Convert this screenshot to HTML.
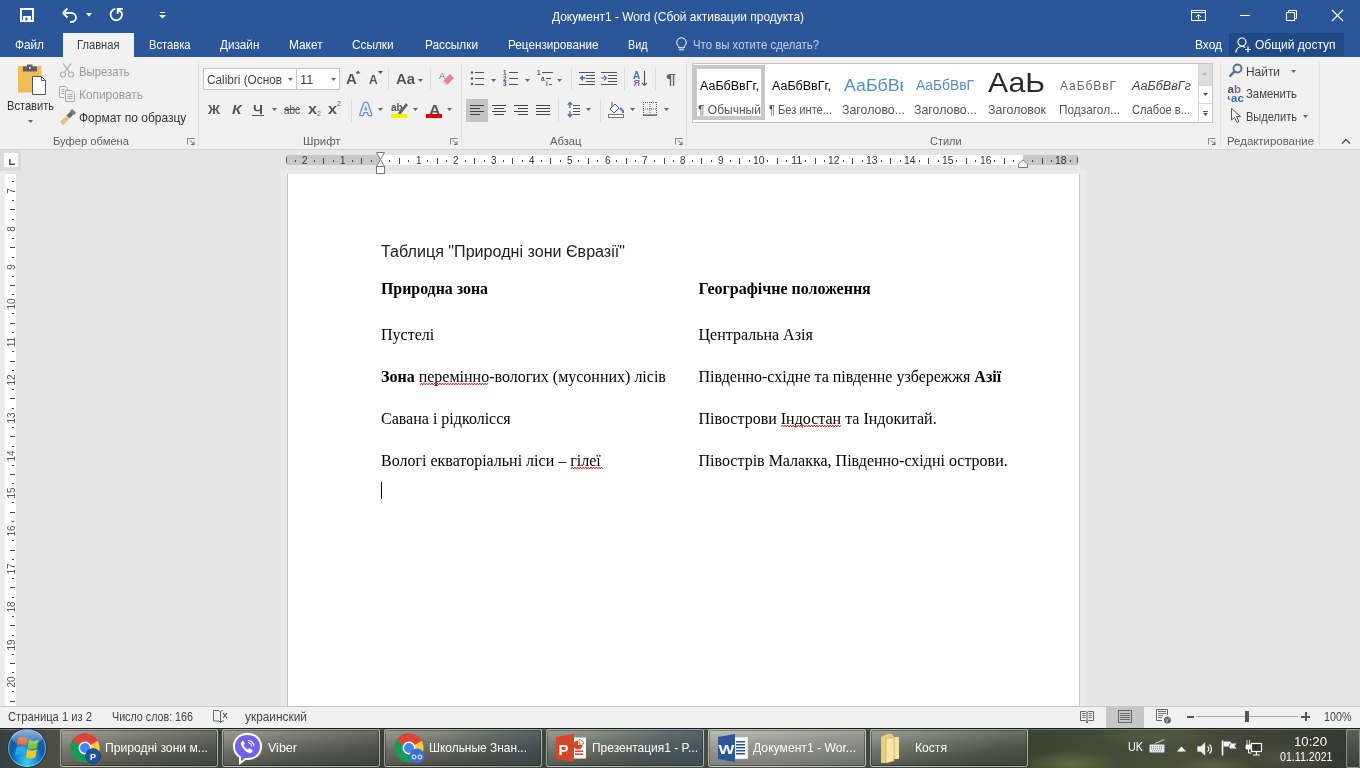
<!DOCTYPE html>
<html><head><meta charset="utf-8">
<style>
*{margin:0;padding:0;box-sizing:border-box}
html,body{width:1360px;height:768px;overflow:hidden;background:#e6e6e6;font-family:"Liberation Sans",sans-serif;position:relative}
.a{position:absolute;white-space:nowrap}
#root{position:absolute;left:0;top:0;width:1360px;height:768px;will-change:transform}
svg.a{overflow:visible}
</style></head><body><div id="root">
<div class="a" style="left:0px;top:0px;width:1360px;height:57px;background:#2b579a;"></div>
<svg class="a" style="left:20px;top:8px;" width="14" height="14" viewBox="0 0 14 14"><path d="M1 1H13V13H1Z" fill="none" stroke="#fff" stroke-width="2"/><rect x="3" y="8" width="8" height="5" fill="#fff"/><rect x="5.5" y="9.5" width="2" height="3" fill="#2b579a"/></svg>
<svg class="a" style="left:62px;top:7px;" width="16" height="16" viewBox="0 0 16 16"><path d="M3 6 H9.5 A4.5 4.5 0 0 1 9.5 15 H8" fill="none" stroke="#fff" stroke-width="1.8"/><path d="M1 6 L5.5 1.5 M1 6 L5.5 10.5" fill="none" stroke="#fff" stroke-width="1.8"/></svg>
<svg class="a" style="left:86px;top:13px;" width="6" height="4" viewBox="0 0 6 4"><path d="M0 0H6L3 3.5Z" fill="#fff"/></svg>
<svg class="a" style="left:109px;top:7px;" width="16" height="16" viewBox="0 0 16 16"><path d="M6.3 1.9A5.7 5.7 0 1 0 12.2 4.6" fill="none" stroke="#fff" stroke-width="1.8"/><path d="M14 1.8H8.7V6.8M9 2.1L12.4 5.5" fill="none" stroke="#fff" stroke-width="1.8"/></svg>
<svg class="a" style="left:159px;top:12px;" width="7" height="7" viewBox="0 0 7 7"><rect x="1" y="0" width="5" height="1" fill="#fff"/><path d="M0 3H7L3.5 6.5Z" fill="#fff"/></svg>
<div class="a" style="left:552px;top:11.00px;font-family:'Liberation Sans';font-size:12.6px;line-height:1;color:#fff;font-weight:normal;transform:scaleX(0.9476);transform-origin:0 0;">Документ1 - Word (Сбой активации продукта)</div>
<svg class="a" style="left:1191px;top:10px;" width="15" height="11" viewBox="0 0 15 11"><rect x="0.5" y="0.5" width="14" height="10" fill="none" stroke="#fff"/><line x1="0.5" y1="2.5" x2="14.5" y2="2.5" stroke="#fff"/><path d="M7.5 9.5V4.5M5 7L7.5 4.5L10 7" fill="none" stroke="#fff"/></svg>
<div class="a" style="left:1240px;top:15px;width:10px;height:1px;background:#fff;"></div>
<svg class="a" style="left:1286px;top:10px;" width="11" height="11" viewBox="0 0 11 11"><path d="M2.5 2.5V0.5H10.5V8.5H8.5" fill="none" stroke="#fff"/><rect x="0.5" y="2.5" width="8" height="8" fill="none" stroke="#fff"/></svg>
<svg class="a" style="left:1332px;top:10px;" width="11" height="11" viewBox="0 0 11 11"><path d="M0 0L11 11M11 0L0 11" stroke="#fff" stroke-width="1.1"/></svg>
<div class="a" style="left:63px;top:33px;width:71px;height:24px;background:#f1f1f1;"></div>
<div class="a" style="left:15px;top:39.00px;font-family:'Liberation Sans';font-size:12.6px;line-height:1;color:#fff;font-weight:normal;transform:scaleX(0.9364);transform-origin:0 0;">Файл</div>
<div class="a" style="left:76.5px;top:39.00px;font-family:'Liberation Sans';font-size:12.6px;line-height:1;color:#333d4d;font-weight:normal;transform:scaleX(0.8866);transform-origin:0 0;">Главная</div>
<div class="a" style="left:149px;top:39.00px;font-family:'Liberation Sans';font-size:12.6px;line-height:1;color:#fff;font-weight:normal;transform:scaleX(0.8887);transform-origin:0 0;">Вставка</div>
<div class="a" style="left:220px;top:39.00px;font-family:'Liberation Sans';font-size:12.6px;line-height:1;color:#fff;font-weight:normal;transform:scaleX(0.9305);transform-origin:0 0;">Дизайн</div>
<div class="a" style="left:289px;top:39.00px;font-family:'Liberation Sans';font-size:12.6px;line-height:1;color:#fff;font-weight:normal;transform:scaleX(0.9423);transform-origin:0 0;">Макет</div>
<div class="a" style="left:352.4px;top:39.00px;font-family:'Liberation Sans';font-size:12.6px;line-height:1;color:#fff;font-weight:normal;transform:scaleX(0.9381);transform-origin:0 0;">Ссылки</div>
<div class="a" style="left:424.5px;top:39.00px;font-family:'Liberation Sans';font-size:12.6px;line-height:1;color:#fff;font-weight:normal;transform:scaleX(0.9375);transform-origin:0 0;">Рассылки</div>
<div class="a" style="left:507.5px;top:39.00px;font-family:'Liberation Sans';font-size:12.6px;line-height:1;color:#fff;font-weight:normal;transform:scaleX(0.9306);transform-origin:0 0;">Рецензирование</div>
<div class="a" style="left:627.5px;top:39.00px;font-family:'Liberation Sans';font-size:12.6px;line-height:1;color:#fff;font-weight:normal;transform:scaleX(0.8554);transform-origin:0 0;">Вид</div>
<svg class="a" style="left:676px;top:37px;" width="11" height="14" viewBox="0 0 11 14"><path d="M5.5 0.7A4.8 4.8 0 0 0 2.6 9.3V10.8H8.4V9.3A4.8 4.8 0 0 0 5.5 0.7Z" fill="none" stroke="#fff" stroke-width="1"/><line x1="3" y1="12.8" x2="8" y2="12.8" stroke="#fff"/></svg>
<div class="a" style="left:693px;top:39.00px;font-family:'Liberation Sans';font-size:12.6px;line-height:1;color:#c3d2ea;font-weight:normal;transform:scaleX(0.9049);transform-origin:0 0;">Что вы хотите сделать?</div>
<div class="a" style="left:1194.5px;top:39.00px;font-family:'Liberation Sans';font-size:12.6px;line-height:1;color:#fff;font-weight:normal;transform:scaleX(0.9474);transform-origin:0 0;">Вход</div>
<div class="a" style="left:1229px;top:33px;width:115px;height:23px;background:#1f4a86;"></div>
<svg class="a" style="left:1235px;top:37px;" width="17" height="16" viewBox="0 0 17 16"><circle cx="7" cy="5" r="4" fill="none" stroke="#fff" stroke-width="1.2"/><path d="M0.8 15.5C1.5 11 4 9.5 7 9.5C8.5 9.5 9.5 9.9 10.3 10.5" fill="none" stroke="#fff" stroke-width="1.2"/><path d="M13 9.5V15.5M10 12.5H16" stroke="#fff" stroke-width="1.2"/></svg>
<div class="a" style="left:1255px;top:39.00px;font-family:'Liberation Sans';font-size:12.6px;line-height:1;color:#fff;font-weight:normal;transform:scaleX(0.9524);transform-origin:0 0;">Общий доступ</div>
<div class="a" style="left:0px;top:57px;width:1360px;height:93px;background:#f1f1f1;"></div>
<div class="a" style="left:0px;top:149px;width:1360px;height:1px;background:#d5d5d5;"></div>
<div class="a" style="left:198px;top:62px;width:1px;height:84px;background:#e1e1e1;"></div>
<div class="a" style="left:461px;top:62px;width:1px;height:84px;background:#e1e1e1;"></div>
<div class="a" style="left:686px;top:62px;width:1px;height:84px;background:#e1e1e1;"></div>
<div class="a" style="left:1220px;top:62px;width:1px;height:84px;background:#e1e1e1;"></div>
<div class="a" style="left:1319px;top:62px;width:1px;height:84px;background:#e1e1e1;"></div>
<svg class="a" style="left:17px;top:64px;" width="30" height="32" viewBox="0 0 30 32"><rect x="1" y="2" width="23.5" height="26.5" fill="#f1bb56"/><rect x="6" y="2.5" width="14" height="5" fill="#5e5870"/><rect x="10" y="0.5" width="5.5" height="3" fill="#5e5870"/><rect x="12" y="3" width="1.6" height="1.6" fill="#fff"/><path d="M15.5 12.5H24.5L28.5 16.5V30.5H15.5Z" fill="#fff" stroke="#555"/><path d="M24.5 12.5V16.5H28.5" fill="none" stroke="#555"/></svg>
<div class="a" style="left:6.6px;top:100.00px;font-family:'Liberation Sans';font-size:12.8px;line-height:1;color:#333;font-weight:normal;transform:scaleX(0.8664);transform-origin:0 0;">Вставить</div>
<svg class="a" style="left:28px;top:120px;" width="5" height="3" viewBox="0 0 5 3"><path d="M0 0H5L2.5 3Z" fill="#666"/></svg>
<svg class="a" style="left:60px;top:63px;" width="15" height="15" viewBox="0 0 15 15"><circle cx="3" cy="11.5" r="2.5" fill="none" stroke="#aaa" stroke-width="1.2"/><circle cx="11" cy="11.5" r="2.5" fill="none" stroke="#aaa" stroke-width="1.2"/><path d="M4.5 9.5L11 0.5M9.5 9.5L3 0.5" stroke="#aaa" stroke-width="1.2"/></svg>
<div class="a" style="left:79.4px;top:66.00px;font-family:'Liberation Sans';font-size:12.8px;line-height:1;color:#9a9a9a;font-weight:normal;transform:scaleX(0.8872);transform-origin:0 0;">Вырезать</div>
<svg class="a" style="left:59px;top:86px;" width="16" height="16" viewBox="0 0 16 16"><path d="M0.5 0.5H6.5L8.5 2.5V4M0.5 0.5V11.5H5" fill="none" stroke="#aaa"/><path d="M6.5 4.5H12.5L15.5 7.5V15.5H6.5Z" fill="none" stroke="#aaa"/><path d="M8.5 8.5H13.5M8.5 10.5H13.5M8.5 12.5H13.5M2.5 3.5H5.5M2.5 5.5H5.5M2.5 7.5H5" stroke="#aaa"/></svg>
<div class="a" style="left:79.4px;top:89.10px;font-family:'Liberation Sans';font-size:12.8px;line-height:1;color:#9a9a9a;font-weight:normal;transform:scaleX(0.9288);transform-origin:0 0;">Копировать</div>
<svg class="a" style="left:59px;top:109px;" width="17" height="16" viewBox="0 0 17 16"><path d="M1 13L7 7L10 10L4 16Z" fill="#e8c070"/><path d="M7.5 6.5L11.5 2.5L14.5 5.5L10.5 9.5Z" fill="#666"/><path d="M11 2L13 0L17 4L15 6Z" fill="#777"/></svg>
<div class="a" style="left:79.4px;top:111.80px;font-family:'Liberation Sans';font-size:12.8px;line-height:1;color:#333;font-weight:normal;transform:scaleX(0.9351);transform-origin:0 0;">Формат по образцу</div>
<div class="a" style="left:52.6px;top:134.60px;font-family:'Liberation Sans';font-size:11.6px;line-height:1;color:#5e5e5e;font-weight:normal;transform:scaleX(0.9647);transform-origin:0 0;">Буфер обмена</div>
<svg class="a" style="left:187px;top:138px;" width="8" height="7" viewBox="0 0 8 7"><path d="M0.5 6.5V0.5H7.5" fill="none" stroke="#888"/><path d="M3 2.5L7 6.5M7 3.5V6.5H4" fill="none" stroke="#666" stroke-width="1"/></svg>
<div class="a" style="left:203px;top:68px;width:137px;height:22px;background:#fff;border:1px solid #c6c6c6"></div>
<div class="a" style="left:296px;top:69px;width:1px;height:20px;background:#c6c6c6;"></div>
<div class="a" style="left:207px;top:73.50px;font-family:'Liberation Sans';font-size:12.8px;line-height:1;color:#444;font-weight:normal;transform:scaleX(0.9211);transform-origin:0 0;">Calibri (Основ</div>
<svg class="a" style="left:288px;top:78px;" width="5" height="3" viewBox="0 0 5 3"><path d="M0 0H5L2.5 3Z" fill="#666"/></svg>
<div class="a" style="left:300px;top:73.50px;font-family:'Liberation Sans';font-size:12.8px;line-height:1;color:#444;font-weight:normal;">11</div>
<svg class="a" style="left:331px;top:78px;" width="5" height="3" viewBox="0 0 5 3"><path d="M0 0H5L2.5 3Z" fill="#666"/></svg>
<svg class="a" style="left:345px;top:69px;" width="17" height="17" viewBox="0 0 17 17"><text x="1" y="15" font-family="Liberation Sans" font-size="15" font-weight="bold" fill="#555">A</text><path d="M10.5 4.5H15.5L13 1.5Z" fill="#555"/></svg>
<svg class="a" style="left:368px;top:70px;" width="17" height="16" viewBox="0 0 17 16"><text x="1" y="14" font-family="Liberation Sans" font-size="12" font-weight="bold" fill="#555">A</text><path d="M10 1H15L12.5 4Z" fill="#555"/></svg>
<div class="a" style="left:388px;top:68px;width:1px;height:22px;background:#dcdcdc;"></div>
<div class="a" style="left:396px;top:72.00px;font-family:'Liberation Sans';font-size:14px;line-height:1;color:#555;font-weight:bold;transform:scaleX(1.0611);transform-origin:0 0;">Aa</div>
<svg class="a" style="left:418px;top:79px;" width="5" height="3" viewBox="0 0 5 3"><path d="M0 0H5L2.5 3Z" fill="#666"/></svg>
<div class="a" style="left:430px;top:68px;width:1px;height:22px;background:#dcdcdc;"></div>
<svg class="a" style="left:439px;top:70px;" width="16" height="16" viewBox="0 0 16 16"><text x="0" y="9" font-family="Liberation Sans" font-size="9" fill="#777">A</text><path d="M4 11L11 4L15 8L8 15Z" fill="#e07a86" opacity=".9"/><path d="M4 11L8 15" stroke="#f4c0c6" stroke-width="2"/></svg>
<div class="a" style="left:207.5px;top:102.60px;font-family:'Liberation Sans';font-size:13px;line-height:1;color:#555;font-weight:bold;transform:scaleX(1.0213);transform-origin:0 0;">Ж</div>
<div class="a" style="left:231.5px;top:102.60px;font-family:'Liberation Sans';font-size:13px;line-height:1;color:#555;font-weight:bold;transform:scaleX(1.1875);transform-origin:0 0;font-style:italic">К</div>
<div class="a" style="left:253px;top:102.60px;font-family:'Liberation Sans';font-size:13px;line-height:1;color:#555;font-weight:bold;transform:scaleX(1.0940);transform-origin:0 0;">Ч</div>
<div class="a" style="left:252px;top:115px;width:12px;height:1.2px;background:#555;"></div>
<svg class="a" style="left:272px;top:108px;" width="5" height="3" viewBox="0 0 5 3"><path d="M0 0H5L2.5 3Z" fill="#666"/></svg>
<div class="a" style="left:284px;top:103.60px;font-family:'Liberation Sans';font-size:12.8px;line-height:1;color:#555;font-weight:normal;transform:scaleX(0.7752);transform-origin:0 0;">abc</div>
<div class="a" style="left:284px;top:109px;width:16px;height:1px;background:#555;"></div>
<div class="a" style="left:308px;top:101.60px;font-family:'Liberation Sans';font-size:14px;line-height:1;color:#555;font-weight:bold;transform:scaleX(1.1543);transform-origin:0 0;">x</div>
<div class="a" style="left:317px;top:110.00px;font-family:'Liberation Sans';font-size:7px;line-height:1;color:#2e75b6;font-weight:normal;">2</div>
<div class="a" style="left:328px;top:101.60px;font-family:'Liberation Sans';font-size:14px;line-height:1;color:#555;font-weight:bold;transform:scaleX(1.1543);transform-origin:0 0;">x</div>
<div class="a" style="left:337px;top:100.00px;font-family:'Liberation Sans';font-size:7px;line-height:1;color:#555;font-weight:normal;">2</div>
<div class="a" style="left:351px;top:99px;width:1px;height:23px;background:#dcdcdc;"></div>
<svg class="a" style="left:359px;top:101px;" width="16" height="16" viewBox="0 0 16 16"><text x="1" y="14" font-family="Liberation Sans" font-size="16" font-weight="bold" fill="#e6f0fa" stroke="#6a93c2" stroke-width="2.6" paint-order="stroke" stroke-linejoin="round">A</text></svg>
<svg class="a" style="left:378px;top:108px;" width="5" height="3" viewBox="0 0 5 3"><path d="M0 0H5L2.5 3Z" fill="#666"/></svg>
<svg class="a" style="left:391px;top:101px;" width="19" height="18" viewBox="0 0 19 18"><text x="0" y="10" font-family="Liberation Sans" font-size="10" font-weight="bold" fill="#555">ab</text><path d="M7 12L15 2L17 4L9 14Z" fill="#666"/><rect x="0" y="13" width="16" height="4" fill="#f2f200"/></svg>
<svg class="a" style="left:413px;top:108px;" width="5" height="3" viewBox="0 0 5 3"><path d="M0 0H5L2.5 3Z" fill="#666"/></svg>
<div class="a" style="left:428.5px;top:101.50px;font-family:'Liberation Sans';font-size:15px;line-height:1;color:#555;font-weight:bold;transform:scaleX(1.0605);transform-origin:0 0;">A</div>
<div class="a" style="left:426px;top:114px;width:16px;height:4px;background:#e00000;"></div>
<svg class="a" style="left:447px;top:108px;" width="5" height="3" viewBox="0 0 5 3"><path d="M0 0H5L2.5 3Z" fill="#666"/></svg>
<div class="a" style="left:303px;top:134.60px;font-family:'Liberation Sans';font-size:11.6px;line-height:1;color:#5e5e5e;font-weight:normal;transform:scaleX(0.9854);transform-origin:0 0;">Шрифт</div>
<svg class="a" style="left:450px;top:138px;" width="8" height="7" viewBox="0 0 8 7"><path d="M0.5 6.5V0.5H7.5" fill="none" stroke="#888"/><path d="M3 2.5L7 6.5M7 3.5V6.5H4" fill="none" stroke="#666" stroke-width="1"/></svg>
<svg class="a" style="left:470px;top:70px;" width="16" height="16" viewBox="0 0 16 16"><circle cx="2" cy="2.5" r="1.2" fill="#3d5f8c"/><circle cx="2" cy="8.5" r="1.2" fill="#3d5f8c"/><circle cx="2" cy="14" r="1.2" fill="#3d5f8c"/><rect x="5" y="2" width="9" height="1" fill="#555"/><rect x="5" y="8" width="9" height="1" fill="#555"/><rect x="5" y="14" width="9" height="1" fill="#555"/></svg>
<svg class="a" style="left:491px;top:79px;" width="5" height="3" viewBox="0 0 5 3"><path d="M0 0H5L2.5 3Z" fill="#666"/></svg>
<svg class="a" style="left:503px;top:70px;" width="16" height="16" viewBox="0 0 16 16"><text x="0" y="5" font-family="Liberation Sans" font-size="6.5" font-weight="bold" fill="#3d5f8c">1</text><text x="0" y="11" font-family="Liberation Sans" font-size="6.5" font-weight="bold" fill="#3d5f8c">2</text><text x="0" y="16" font-family="Liberation Sans" font-size="6.5" font-weight="bold" fill="#3d5f8c">3</text><rect x="6" y="2" width="9" height="1" fill="#555"/><rect x="6" y="8" width="9" height="1" fill="#555"/><rect x="6" y="14" width="9" height="1" fill="#555"/></svg>
<svg class="a" style="left:525px;top:79px;" width="5" height="3" viewBox="0 0 5 3"><path d="M0 0H5L2.5 3Z" fill="#666"/></svg>
<svg class="a" style="left:537px;top:70px;" width="18" height="16" viewBox="0 0 18 16"><text x="0" y="5" font-family="Liberation Sans" font-size="6.5" font-weight="bold" fill="#3d5f8c">1</text><text x="4" y="11" font-family="Liberation Sans" font-size="6.5" font-weight="bold" fill="#3d5f8c">a</text><text x="9" y="16" font-family="Liberation Sans" font-size="6.5" font-weight="bold" fill="#3d5f8c">i</text><rect x="5" y="2" width="11" height="1" fill="#555"/><rect x="9" y="8" width="5" height="1" fill="#555"/><rect x="12" y="14" width="3" height="1" fill="#555"/></svg>
<svg class="a" style="left:557px;top:79px;" width="5" height="3" viewBox="0 0 5 3"><path d="M0 0H5L2.5 3Z" fill="#666"/></svg>
<div class="a" style="left:571px;top:68px;width:1px;height:22px;background:#dcdcdc;"></div>
<svg class="a" style="left:579px;top:71px;" width="17" height="15" viewBox="0 0 17 15"><rect x="0" y="1" width="16" height="1" fill="#555"/><rect x="7" y="4" width="9" height="1" fill="#555"/><rect x="7" y="7" width="9" height="1" fill="#555"/><rect x="7" y="10" width="9" height="1" fill="#555"/><rect x="0" y="13" width="16" height="1" fill="#555"/><path d="M0.5 7L4 4V10Z M3 6.3H6.5V7.7H3Z" fill="#4a72a8"/></svg>
<svg class="a" style="left:601px;top:71px;" width="17" height="15" viewBox="0 0 17 15"><rect x="0" y="1" width="16" height="1" fill="#555"/><rect x="7" y="4" width="9" height="1" fill="#555"/><rect x="7" y="7" width="9" height="1" fill="#555"/><rect x="7" y="10" width="9" height="1" fill="#555"/><rect x="0" y="13" width="16" height="1" fill="#555"/><path d="M6.5 7L3 4V10Z M0.5 6.3H4V7.7H0.5Z" fill="#4a72a8"/></svg>
<div class="a" style="left:624px;top:68px;width:1px;height:22px;background:#dcdcdc;"></div>
<svg class="a" style="left:633px;top:70px;" width="16" height="17" viewBox="0 0 16 17"><text x="0" y="8.5" font-family="Liberation Sans" font-size="10" font-weight="bold" fill="#3f78b8">A</text><text x="0.5" y="16" font-family="Liberation Sans" font-size="9" font-weight="bold" fill="#8a5fb5">Я</text><path d="M11.5 1V15.5M9 12.8L11.5 15.5L14 12.8" fill="none" stroke="#555" stroke-width="1.1"/></svg>
<div class="a" style="left:655px;top:68px;width:1px;height:22px;background:#dcdcdc;"></div>
<div class="a" style="left:666px;top:70.50px;font-family:'Liberation Sans';font-size:15px;line-height:1;color:#666;font-weight:bold;transform:scaleX(1.1985);transform-origin:0 0;">¶</div>
<div class="a" style="left:466px;top:99px;width:22px;height:22.5px;background:#c5c5c5;"></div>
<svg class="a" style="left:470px;top:105px;" width="14" height="12" viewBox="0 0 14 12"><rect x="0" y="0" width="14" height="1" fill="#444"/><rect x="0" y="3" width="10" height="1" fill="#444"/><rect x="0" y="6" width="14" height="1" fill="#444"/><rect x="0" y="9" width="10" height="1" fill="#444"/></svg>
<svg class="a" style="left:492px;top:105px;" width="14" height="12" viewBox="0 0 14 12"><rect x="0.0" y="0" width="14" height="1" fill="#444"/><rect x="2.0" y="3" width="10" height="1" fill="#444"/><rect x="0.0" y="6" width="14" height="1" fill="#444"/><rect x="2.0" y="9" width="10" height="1" fill="#444"/></svg>
<svg class="a" style="left:514px;top:105px;" width="14" height="12" viewBox="0 0 14 12"><rect x="0" y="0" width="14" height="1" fill="#444"/><rect x="4" y="3" width="10" height="1" fill="#444"/><rect x="0" y="6" width="14" height="1" fill="#444"/><rect x="4" y="9" width="10" height="1" fill="#444"/></svg>
<svg class="a" style="left:536px;top:105px;" width="14" height="12" viewBox="0 0 14 12"><rect x="0" y="0" width="14" height="1" fill="#444"/><rect x="0" y="3" width="14" height="1" fill="#444"/><rect x="0" y="6" width="14" height="1" fill="#444"/><rect x="0" y="9" width="14" height="1" fill="#444"/></svg>
<div class="a" style="left:558px;top:99px;width:1px;height:23px;background:#dcdcdc;"></div>
<svg class="a" style="left:567px;top:101px;" width="14" height="18" viewBox="0 0 14 18"><path d="M3 1.5V7M0.8 3.7L3 1.5L5.2 3.7M3 10V15.5M0.8 13.3L3 15.5L5.2 13.3" fill="none" stroke="#4a6d96" stroke-width="1.3"/><rect x="6" y="4" width="7" height="1" fill="#555"/><rect x="6" y="7" width="7" height="1" fill="#555"/><rect x="6" y="10" width="7" height="1" fill="#555"/><rect x="6" y="13" width="7" height="1" fill="#555"/></svg>
<svg class="a" style="left:586px;top:108px;" width="5" height="3" viewBox="0 0 5 3"><path d="M0 0H5L2.5 3Z" fill="#666"/></svg>
<div class="a" style="left:600px;top:99px;width:1px;height:23px;background:#dcdcdc;"></div>
<svg class="a" style="left:607px;top:101px;" width="18" height="18" viewBox="0 0 18 18"><path d="M3 8L8 3L12 7L7 12Z" fill="#fff" stroke="#555" stroke-width="1"/><path d="M5 1V6" stroke="#555"/><path d="M13 7L16 10V12" fill="none" stroke="#4a7bb7" stroke-width="2"/><rect x="1.5" y="13.5" width="15" height="3" fill="#fff" stroke="#777"/></svg>
<svg class="a" style="left:630px;top:108px;" width="5" height="3" viewBox="0 0 5 3"><path d="M0 0H5L2.5 3Z" fill="#666"/></svg>
<svg class="a" style="left:643px;top:102px;" width="14" height="14" viewBox="0 0 14 14"><path d="M0.5 0V13 M13.5 0V13 M7 0V13 M0 0.5H14 M0 7H14" fill="none" stroke="#666" stroke-dasharray="1 1"/><rect x="0" y="12.5" width="14" height="1.3" fill="#555"/></svg>
<svg class="a" style="left:664px;top:108px;" width="5" height="3" viewBox="0 0 5 3"><path d="M0 0H5L2.5 3Z" fill="#666"/></svg>
<div class="a" style="left:550px;top:134.60px;font-family:'Liberation Sans';font-size:11.6px;line-height:1;color:#5e5e5e;font-weight:normal;transform:scaleX(0.9683);transform-origin:0 0;">Абзац</div>
<svg class="a" style="left:675px;top:138px;" width="8" height="7" viewBox="0 0 8 7"><path d="M0.5 6.5V0.5H7.5" fill="none" stroke="#888"/><path d="M3 2.5L7 6.5M7 3.5V6.5H4" fill="none" stroke="#666" stroke-width="1"/></svg>
<div class="a" style="left:692px;top:63px;width:521px;height:60px;background:#fff;border:1px solid #c6c6c6"></div>
<div class="a" style="left:693px;top:65px;width:72px;height:55px;background:#fff;border:4px solid #c8c8c8"></div>
<div class="a" style="left:700px;top:79.50px;font-family:'Liberation Sans';font-size:12.5px;line-height:1;color:#000;font-weight:normal;transform:scaleX(0.9992);transform-origin:0 0;">АаБбВвГг,</div>
<div class="a" style="left:697.6px;top:104.00px;font-family:'Liberation Sans';font-size:12.8px;line-height:1;color:#555;font-weight:normal;transform:scaleX(0.9403);transform-origin:0 0;">¶ Обычный</div>
<div class="a" style="left:772px;top:79.50px;font-family:'Liberation Sans';font-size:12.5px;line-height:1;color:#000;font-weight:normal;transform:scaleX(0.9992);transform-origin:0 0;">АаБбВвГг,</div>
<div class="a" style="left:769px;top:104.00px;font-family:'Liberation Sans';font-size:12.8px;line-height:1;color:#555;font-weight:normal;transform:scaleX(0.8652);transform-origin:0 0;">¶ Без инте...</div>
<div class="a" style="left:840px;top:66px;width:63px;height:54px;overflow:hidden">
<div class="a" style="left:4px;top:10.50px;font-family:'Liberation Sans';font-size:17px;line-height:1;color:#4f8fca;font-weight:normal;transform:scaleX(1.0442);transform-origin:0 0;">АаБбВв</div>
</div>
<div class="a" style="left:841.6px;top:104.00px;font-family:'Liberation Sans';font-size:12.8px;line-height:1;color:#555;font-weight:normal;transform:scaleX(0.9657);transform-origin:0 0;">Заголово...</div>
<div class="a" style="left:916px;top:77.50px;font-family:'Liberation Sans';font-size:14px;line-height:1;color:#5b8ec2;font-weight:normal;transform:scaleX(0.9857);transform-origin:0 0;">АаБбВвГ</div>
<div class="a" style="left:914px;top:104.00px;font-family:'Liberation Sans';font-size:12.8px;line-height:1;color:#555;font-weight:normal;transform:scaleX(0.9657);transform-origin:0 0;">Заголово...</div>
<div class="a" style="left:988px;top:69.00px;font-family:'Liberation Sans';font-size:28px;line-height:1;color:#2a2a2a;font-weight:normal;transform:scaleX(1.0767);transform-origin:0 0;">АаЬ</div>
<div class="a" style="left:988px;top:104.00px;font-family:'Liberation Sans';font-size:12.8px;line-height:1;color:#555;font-weight:normal;transform:scaleX(0.9639);transform-origin:0 0;">Заголовок</div>
<div class="a" style="left:1060px;top:78.50px;font-family:'Liberation Sans';font-size:13px;line-height:1;color:#666;font-weight:normal;transform:scaleX(0.9247);transform-origin:0 0;letter-spacing:1px">АаБбВвГ</div>
<div class="a" style="left:1058.6px;top:104.00px;font-family:'Liberation Sans';font-size:12.8px;line-height:1;color:#555;font-weight:normal;transform:scaleX(0.9264);transform-origin:0 0;">Подзагол...</div>
<div class="a" style="left:1132px;top:79.50px;font-family:'Liberation Sans';font-size:12.5px;line-height:1;color:#444;font-weight:normal;transform:scaleX(1.0121);transform-origin:0 0;font-style:italic">АаБбВвГг</div>
<div class="a" style="left:1131.7px;top:104.00px;font-family:'Liberation Sans';font-size:12.8px;line-height:1;color:#555;font-weight:normal;transform:scaleX(0.8732);transform-origin:0 0;">Слабое в...</div>
<div class="a" style="left:1198px;top:64px;width:14px;height:58px;background:#fff;border-left:1px solid #d6d6d6"></div>
<div class="a" style="left:1199px;top:64px;width:13px;height:21px;background:#dedede;"></div>
<div class="a" style="left:1199px;top:85px;width:13px;height:1px;background:#d6d6d6;"></div>
<div class="a" style="left:1199px;top:103px;width:13px;height:1px;background:#d6d6d6;"></div>
<svg class="a" style="left:1202px;top:72px;" width="6" height="4" viewBox="0 0 6 4"><path d="M0 3H5L2.5 0Z" fill="#bbb"/></svg>
<svg class="a" style="left:1203px;top:93px;" width="5" height="3" viewBox="0 0 5 3"><path d="M0 0H5L2.5 3Z" fill="#555"/></svg>
<svg class="a" style="left:1203px;top:111px;" width="5" height="6" viewBox="0 0 5 6"><rect x="0" y="0" width="5" height="1" fill="#555"/><path d="M0 2H5L2.5 5Z" fill="#555"/></svg>
<div class="a" style="left:930px;top:134.60px;font-family:'Liberation Sans';font-size:11.6px;line-height:1;color:#5e5e5e;font-weight:normal;transform:scaleX(0.9429);transform-origin:0 0;">Стили</div>
<svg class="a" style="left:1208px;top:138px;" width="8" height="7" viewBox="0 0 8 7"><path d="M0.5 6.5V0.5H7.5" fill="none" stroke="#888"/><path d="M3 2.5L7 6.5M7 3.5V6.5H4" fill="none" stroke="#666" stroke-width="1"/></svg>
<svg class="a" style="left:1229px;top:63px;" width="14" height="14" viewBox="0 0 14 14"><circle cx="8.5" cy="5.5" r="4" fill="none" stroke="#4f7192" stroke-width="1.9"/><path d="M5.6 8.4L1.2 12.8" stroke="#5b7890" stroke-width="2.6" stroke-linecap="round"/></svg>
<div class="a" style="left:1246.3px;top:65.50px;font-family:'Liberation Sans';font-size:12.8px;line-height:1;color:#444;font-weight:normal;transform:scaleX(0.9307);transform-origin:0 0;">Найти</div>
<svg class="a" style="left:1291px;top:70px;" width="5" height="3" viewBox="0 0 5 3"><path d="M0 0H5L2.5 3Z" fill="#666"/></svg>
<svg class="a" style="left:1227px;top:84px;" width="18" height="18" viewBox="0 0 18 18"><text x="0.5" y="9" font-family="Liberation Sans" font-size="11.5" font-weight="bold" fill="#555">a<tspan fill="#8a63b0">b</tspan></text><text x="4" y="17.5" font-family="Liberation Sans" font-size="11.5" font-weight="bold" fill="#3f6a96">ac</text><path d="M1.5 12V15H3.5" fill="none" stroke="#3f6a96" stroke-width="1.2"/></svg>
<div class="a" style="left:1246.3px;top:88.40px;font-family:'Liberation Sans';font-size:12.8px;line-height:1;color:#444;font-weight:normal;transform:scaleX(0.8867);transform-origin:0 0;">Заменить</div>
<svg class="a" style="left:1231px;top:108px;" width="10" height="15" viewBox="0 0 10 15"><path d="M0.5 0.5V12L3.5 9.5L6 14.5L8 13.5L5.5 8.5H9.5Z" fill="#fff" stroke="#555"/></svg>
<div class="a" style="left:1246.3px;top:111.40px;font-family:'Liberation Sans';font-size:12.8px;line-height:1;color:#444;font-weight:normal;transform:scaleX(0.8637);transform-origin:0 0;">Выделить</div>
<svg class="a" style="left:1303px;top:115px;" width="5" height="3" viewBox="0 0 5 3"><path d="M0 0H5L2.5 3Z" fill="#666"/></svg>
<div class="a" style="left:1226.7px;top:134.60px;font-family:'Liberation Sans';font-size:11.6px;line-height:1;color:#5e5e5e;font-weight:normal;transform:scaleX(0.9850);transform-origin:0 0;">Редактирование</div>
<svg class="a" style="left:1341px;top:138px;" width="10" height="6" viewBox="0 0 10 6"><path d="M1 5.5L5 1.5L9 5.5" fill="none" stroke="#555" stroke-width="1.5"/></svg>
<div class="a" style="left:281px;top:170px;width:805px;height:536px;background:#eaeaea;"></div>
<div class="a" style="left:287px;top:174px;width:793px;height:532px;background:#c6c6c6;"></div>
<div class="a" style="left:288px;top:174px;width:791px;height:532px;background:#fff;"></div>
<div class="a" style="left:0px;top:150px;width:21px;height:21px;background:#dcdcdc;"></div>
<div class="a" style="left:4px;top:153px;width:14px;height:14px;background:#fff;"></div>
<svg class="a" style="left:9px;top:159px;" width="6" height="6" viewBox="0 0 6 6"><path d="M0.8 0V5.2H6" fill="none" stroke="#555" stroke-width="1.6"/></svg>
<div class="a" style="left:286px;top:155px;width:792px;height:10px;background:#c8c8c8;"></div>
<div class="a" style="left:380px;top:155px;width:643px;height:10px;background:#fff;"></div>
<div class="a" style="left:295px;top:160px;width:1px;height:1.5px;background:#444;"></div>
<div class="a" style="left:302.1px;top:156.00px;font-family:'Liberation Sans';font-size:10px;line-height:1;color:#333;font-weight:normal;transform:scaleX(0.9888);transform-origin:0 0;">2</div>
<div class="a" style="left:314px;top:160px;width:1px;height:1.5px;background:#444;"></div>
<div class="a" style="left:323px;top:158px;width:1px;height:6px;background:#444;"></div>
<div class="a" style="left:333px;top:160px;width:1px;height:1.5px;background:#444;"></div>
<div class="a" style="left:339.9px;top:156.00px;font-family:'Liberation Sans';font-size:10px;line-height:1;color:#333;font-weight:normal;transform:scaleX(0.9888);transform-origin:0 0;">1</div>
<div class="a" style="left:352px;top:160px;width:1px;height:1.5px;background:#444;"></div>
<div class="a" style="left:361px;top:158px;width:1px;height:6px;background:#444;"></div>
<div class="a" style="left:371px;top:160px;width:1px;height:1.5px;background:#444;"></div>
<div class="a" style="left:389px;top:160px;width:1px;height:1.5px;background:#444;"></div>
<div class="a" style="left:399px;top:158px;width:1px;height:6px;background:#444;"></div>
<div class="a" style="left:408px;top:160px;width:1px;height:1.5px;background:#444;"></div>
<div class="a" style="left:415.6px;top:156.00px;font-family:'Liberation Sans';font-size:10px;line-height:1;color:#333;font-weight:normal;transform:scaleX(0.9888);transform-origin:0 0;">1</div>
<div class="a" style="left:427px;top:160px;width:1px;height:1.5px;background:#444;"></div>
<div class="a" style="left:437px;top:158px;width:1px;height:6px;background:#444;"></div>
<div class="a" style="left:446px;top:160px;width:1px;height:1.5px;background:#444;"></div>
<div class="a" style="left:453.4px;top:156.00px;font-family:'Liberation Sans';font-size:10px;line-height:1;color:#333;font-weight:normal;transform:scaleX(0.9888);transform-origin:0 0;">2</div>
<div class="a" style="left:465px;top:160px;width:1px;height:1.5px;background:#444;"></div>
<div class="a" style="left:474px;top:158px;width:1px;height:6px;background:#444;"></div>
<div class="a" style="left:484px;top:160px;width:1px;height:1.5px;background:#444;"></div>
<div class="a" style="left:491.1px;top:156.00px;font-family:'Liberation Sans';font-size:10px;line-height:1;color:#333;font-weight:normal;transform:scaleX(0.9888);transform-origin:0 0;">3</div>
<div class="a" style="left:503px;top:160px;width:1px;height:1.5px;background:#444;"></div>
<div class="a" style="left:512px;top:158px;width:1px;height:6px;background:#444;"></div>
<div class="a" style="left:522px;top:160px;width:1px;height:1.5px;background:#444;"></div>
<div class="a" style="left:529.0px;top:156.00px;font-family:'Liberation Sans';font-size:10px;line-height:1;color:#333;font-weight:normal;transform:scaleX(0.9888);transform-origin:0 0;">4</div>
<div class="a" style="left:541px;top:160px;width:1px;height:1.5px;background:#444;"></div>
<div class="a" style="left:550px;top:158px;width:1px;height:6px;background:#444;"></div>
<div class="a" style="left:560px;top:160px;width:1px;height:1.5px;background:#444;"></div>
<div class="a" style="left:566.8px;top:156.00px;font-family:'Liberation Sans';font-size:10px;line-height:1;color:#333;font-weight:normal;transform:scaleX(0.9888);transform-origin:0 0;">5</div>
<div class="a" style="left:578px;top:160px;width:1px;height:1.5px;background:#444;"></div>
<div class="a" style="left:588px;top:158px;width:1px;height:6px;background:#444;"></div>
<div class="a" style="left:597px;top:160px;width:1px;height:1.5px;background:#444;"></div>
<div class="a" style="left:604.5px;top:156.00px;font-family:'Liberation Sans';font-size:10px;line-height:1;color:#333;font-weight:normal;transform:scaleX(0.9888);transform-origin:0 0;">6</div>
<div class="a" style="left:616px;top:160px;width:1px;height:1.5px;background:#444;"></div>
<div class="a" style="left:626px;top:158px;width:1px;height:6px;background:#444;"></div>
<div class="a" style="left:635px;top:160px;width:1px;height:1.5px;background:#444;"></div>
<div class="a" style="left:642.3px;top:156.00px;font-family:'Liberation Sans';font-size:10px;line-height:1;color:#333;font-weight:normal;transform:scaleX(0.9888);transform-origin:0 0;">7</div>
<div class="a" style="left:654px;top:160px;width:1px;height:1.5px;background:#444;"></div>
<div class="a" style="left:664px;top:158px;width:1px;height:6px;background:#444;"></div>
<div class="a" style="left:673px;top:160px;width:1px;height:1.5px;background:#444;"></div>
<div class="a" style="left:680.1px;top:156.00px;font-family:'Liberation Sans';font-size:10px;line-height:1;color:#333;font-weight:normal;transform:scaleX(0.9888);transform-origin:0 0;">8</div>
<div class="a" style="left:692px;top:160px;width:1px;height:1.5px;background:#444;"></div>
<div class="a" style="left:701px;top:158px;width:1px;height:6px;background:#444;"></div>
<div class="a" style="left:711px;top:160px;width:1px;height:1.5px;background:#444;"></div>
<div class="a" style="left:718.0px;top:156.00px;font-family:'Liberation Sans';font-size:10px;line-height:1;color:#333;font-weight:normal;transform:scaleX(0.9888);transform-origin:0 0;">9</div>
<div class="a" style="left:730px;top:160px;width:1px;height:1.5px;background:#444;"></div>
<div class="a" style="left:739px;top:158px;width:1px;height:6px;background:#444;"></div>
<div class="a" style="left:749px;top:160px;width:1px;height:1.5px;background:#444;"></div>
<div class="a" style="left:752.8px;top:156.00px;font-family:'Liberation Sans';font-size:10px;line-height:1;color:#333;font-weight:normal;transform:scaleX(1.0337);transform-origin:0 0;">10</div>
<div class="a" style="left:767px;top:160px;width:1px;height:1.5px;background:#444;"></div>
<div class="a" style="left:777px;top:158px;width:1px;height:6px;background:#444;"></div>
<div class="a" style="left:786px;top:160px;width:1px;height:1.5px;background:#444;"></div>
<div class="a" style="left:790.5px;top:156.00px;font-family:'Liberation Sans';font-size:10px;line-height:1;color:#333;font-weight:normal;transform:scaleX(1.1068);transform-origin:0 0;">11</div>
<div class="a" style="left:805px;top:160px;width:1px;height:1.5px;background:#444;"></div>
<div class="a" style="left:815px;top:158px;width:1px;height:6px;background:#444;"></div>
<div class="a" style="left:824px;top:160px;width:1px;height:1.5px;background:#444;"></div>
<div class="a" style="left:828.3px;top:156.00px;font-family:'Liberation Sans';font-size:10px;line-height:1;color:#333;font-weight:normal;transform:scaleX(1.0337);transform-origin:0 0;">12</div>
<div class="a" style="left:843px;top:160px;width:1px;height:1.5px;background:#444;"></div>
<div class="a" style="left:852px;top:158px;width:1px;height:6px;background:#444;"></div>
<div class="a" style="left:862px;top:160px;width:1px;height:1.5px;background:#444;"></div>
<div class="a" style="left:866.1px;top:156.00px;font-family:'Liberation Sans';font-size:10px;line-height:1;color:#333;font-weight:normal;transform:scaleX(1.0337);transform-origin:0 0;">13</div>
<div class="a" style="left:881px;top:160px;width:1px;height:1.5px;background:#444;"></div>
<div class="a" style="left:890px;top:158px;width:1px;height:6px;background:#444;"></div>
<div class="a" style="left:900px;top:160px;width:1px;height:1.5px;background:#444;"></div>
<div class="a" style="left:903.9px;top:156.00px;font-family:'Liberation Sans';font-size:10px;line-height:1;color:#333;font-weight:normal;transform:scaleX(1.0337);transform-origin:0 0;">14</div>
<div class="a" style="left:919px;top:160px;width:1px;height:1.5px;background:#444;"></div>
<div class="a" style="left:928px;top:158px;width:1px;height:6px;background:#444;"></div>
<div class="a" style="left:938px;top:160px;width:1px;height:1.5px;background:#444;"></div>
<div class="a" style="left:941.8px;top:156.00px;font-family:'Liberation Sans';font-size:10px;line-height:1;color:#333;font-weight:normal;transform:scaleX(1.0337);transform-origin:0 0;">15</div>
<div class="a" style="left:956px;top:160px;width:1px;height:1.5px;background:#444;"></div>
<div class="a" style="left:966px;top:158px;width:1px;height:6px;background:#444;"></div>
<div class="a" style="left:975px;top:160px;width:1px;height:1.5px;background:#444;"></div>
<div class="a" style="left:979.5px;top:156.00px;font-family:'Liberation Sans';font-size:10px;line-height:1;color:#333;font-weight:normal;transform:scaleX(1.0337);transform-origin:0 0;">16</div>
<div class="a" style="left:994px;top:160px;width:1px;height:1.5px;background:#444;"></div>
<div class="a" style="left:1004px;top:158px;width:1px;height:6px;background:#444;"></div>
<div class="a" style="left:1013px;top:160px;width:1px;height:1.5px;background:#444;"></div>
<div class="a" style="left:1032px;top:160px;width:1px;height:1.5px;background:#444;"></div>
<div class="a" style="left:1042px;top:158px;width:1px;height:6px;background:#444;"></div>
<div class="a" style="left:1051px;top:160px;width:1px;height:1.5px;background:#444;"></div>
<div class="a" style="left:1055.2px;top:156.00px;font-family:'Liberation Sans';font-size:10px;line-height:1;color:#333;font-weight:normal;transform:scaleX(1.0337);transform-origin:0 0;">18</div>
<div class="a" style="left:1070px;top:160px;width:1px;height:1.5px;background:#444;"></div>
<div class="a" style="left:286px;top:157px;width:1px;height:6px;background:#555;"></div>
<div class="a" style="left:1077px;top:157px;width:1px;height:6px;background:#555;"></div>
<svg class="a" style="left:376px;top:152px;" width="10" height="22" viewBox="0 0 10 22"><path d="M0.5 0.5H8.5L4.5 7.5L8.5 14.5H0.5L4.5 7.5Z" fill="#fff" stroke="#777"/><rect x="0.5" y="14.5" width="8" height="7" fill="#fff" stroke="#777"/></svg>
<svg class="a" style="left:1018px;top:159px;" width="10" height="10" viewBox="0 0 10 10"><path d="M0.5 8.5V5L5 0.8L9.5 5V8.5Z" fill="#fff" stroke="#777"/></svg>
<div class="a" style="left:0px;top:171px;width:5px;height:535px;background:#ececec;"></div>
<div class="a" style="left:5px;top:174px;width:11px;height:532px;background:#fff;"></div>
<div class="a" style="left:12px;top:181px;width:1.5px;height:1px;background:#444;"></div>
<div class="a" style="left:4px;top:185.0px;width:16px;height:12px;font-family:'Liberation Sans';font-size:10px;line-height:12px;text-align:center;color:#555;transform:rotate(-90deg)">7</div>
<div class="a" style="left:12px;top:200px;width:1.5px;height:1px;background:#444;"></div>
<div class="a" style="left:10px;top:209px;width:5px;height:1.2px;background:#444;"></div>
<div class="a" style="left:12px;top:219px;width:1.5px;height:1px;background:#444;"></div>
<div class="a" style="left:4px;top:222.8px;width:16px;height:12px;font-family:'Liberation Sans';font-size:10px;line-height:12px;text-align:center;color:#555;transform:rotate(-90deg)">8</div>
<div class="a" style="left:12px;top:238px;width:1.5px;height:1px;background:#444;"></div>
<div class="a" style="left:10px;top:247px;width:5px;height:1.2px;background:#444;"></div>
<div class="a" style="left:12px;top:257px;width:1.5px;height:1px;background:#444;"></div>
<div class="a" style="left:4px;top:260.6px;width:16px;height:12px;font-family:'Liberation Sans';font-size:10px;line-height:12px;text-align:center;color:#555;transform:rotate(-90deg)">9</div>
<div class="a" style="left:12px;top:276px;width:1.5px;height:1px;background:#444;"></div>
<div class="a" style="left:10px;top:285px;width:5px;height:1.2px;background:#444;"></div>
<div class="a" style="left:12px;top:294px;width:1.5px;height:1px;background:#444;"></div>
<div class="a" style="left:4px;top:298.40000000000003px;width:16px;height:12px;font-family:'Liberation Sans';font-size:10px;line-height:12px;text-align:center;color:#555;transform:rotate(-90deg)">10</div>
<div class="a" style="left:12px;top:313px;width:1.5px;height:1px;background:#444;"></div>
<div class="a" style="left:10px;top:323px;width:5px;height:1.2px;background:#444;"></div>
<div class="a" style="left:12px;top:332px;width:1.5px;height:1px;background:#444;"></div>
<div class="a" style="left:4px;top:336.2px;width:16px;height:12px;font-family:'Liberation Sans';font-size:10px;line-height:12px;text-align:center;color:#555;transform:rotate(-90deg)">11</div>
<div class="a" style="left:12px;top:351px;width:1.5px;height:1px;background:#444;"></div>
<div class="a" style="left:10px;top:361px;width:5px;height:1.2px;background:#444;"></div>
<div class="a" style="left:12px;top:370px;width:1.5px;height:1px;background:#444;"></div>
<div class="a" style="left:4px;top:374.0px;width:16px;height:12px;font-family:'Liberation Sans';font-size:10px;line-height:12px;text-align:center;color:#555;transform:rotate(-90deg)">12</div>
<div class="a" style="left:12px;top:389px;width:1.5px;height:1px;background:#444;"></div>
<div class="a" style="left:10px;top:398px;width:5px;height:1.2px;background:#444;"></div>
<div class="a" style="left:12px;top:408px;width:1.5px;height:1px;background:#444;"></div>
<div class="a" style="left:4px;top:411.8px;width:16px;height:12px;font-family:'Liberation Sans';font-size:10px;line-height:12px;text-align:center;color:#555;transform:rotate(-90deg)">13</div>
<div class="a" style="left:12px;top:427px;width:1.5px;height:1px;background:#444;"></div>
<div class="a" style="left:10px;top:436px;width:5px;height:1.2px;background:#444;"></div>
<div class="a" style="left:12px;top:446px;width:1.5px;height:1px;background:#444;"></div>
<div class="a" style="left:4px;top:449.59999999999997px;width:16px;height:12px;font-family:'Liberation Sans';font-size:10px;line-height:12px;text-align:center;color:#555;transform:rotate(-90deg)">14</div>
<div class="a" style="left:12px;top:465px;width:1.5px;height:1px;background:#444;"></div>
<div class="a" style="left:10px;top:474px;width:5px;height:1.2px;background:#444;"></div>
<div class="a" style="left:12px;top:483px;width:1.5px;height:1px;background:#444;"></div>
<div class="a" style="left:4px;top:487.40000000000003px;width:16px;height:12px;font-family:'Liberation Sans';font-size:10px;line-height:12px;text-align:center;color:#555;transform:rotate(-90deg)">15</div>
<div class="a" style="left:12px;top:502px;width:1.5px;height:1px;background:#444;"></div>
<div class="a" style="left:10px;top:512px;width:5px;height:1.2px;background:#444;"></div>
<div class="a" style="left:12px;top:521px;width:1.5px;height:1px;background:#444;"></div>
<div class="a" style="left:4px;top:525.2px;width:16px;height:12px;font-family:'Liberation Sans';font-size:10px;line-height:12px;text-align:center;color:#555;transform:rotate(-90deg)">16</div>
<div class="a" style="left:12px;top:540px;width:1.5px;height:1px;background:#444;"></div>
<div class="a" style="left:10px;top:550px;width:5px;height:1.2px;background:#444;"></div>
<div class="a" style="left:12px;top:559px;width:1.5px;height:1px;background:#444;"></div>
<div class="a" style="left:4px;top:563.0px;width:16px;height:12px;font-family:'Liberation Sans';font-size:10px;line-height:12px;text-align:center;color:#555;transform:rotate(-90deg)">17</div>
<div class="a" style="left:12px;top:578px;width:1.5px;height:1px;background:#444;"></div>
<div class="a" style="left:10px;top:587px;width:5px;height:1.2px;background:#444;"></div>
<div class="a" style="left:12px;top:597px;width:1.5px;height:1px;background:#444;"></div>
<div class="a" style="left:4px;top:600.8px;width:16px;height:12px;font-family:'Liberation Sans';font-size:10px;line-height:12px;text-align:center;color:#555;transform:rotate(-90deg)">18</div>
<div class="a" style="left:12px;top:616px;width:1.5px;height:1px;background:#444;"></div>
<div class="a" style="left:10px;top:625px;width:5px;height:1.2px;background:#444;"></div>
<div class="a" style="left:12px;top:635px;width:1.5px;height:1px;background:#444;"></div>
<div class="a" style="left:4px;top:638.5999999999999px;width:16px;height:12px;font-family:'Liberation Sans';font-size:10px;line-height:12px;text-align:center;color:#555;transform:rotate(-90deg)">19</div>
<div class="a" style="left:12px;top:654px;width:1.5px;height:1px;background:#444;"></div>
<div class="a" style="left:10px;top:663px;width:5px;height:1.2px;background:#444;"></div>
<div class="a" style="left:12px;top:672px;width:1.5px;height:1px;background:#444;"></div>
<div class="a" style="left:4px;top:676.4000000000001px;width:16px;height:12px;font-family:'Liberation Sans';font-size:10px;line-height:12px;text-align:center;color:#555;transform:rotate(-90deg)">20</div>
<div class="a" style="left:12px;top:691px;width:1.5px;height:1px;background:#444;"></div>
<div class="a" style="left:10px;top:701px;width:5px;height:1.2px;background:#444;"></div>
<div class="a" style="left:381px;top:243.80px;font-family:'Liberation Sans';font-size:16px;line-height:1;color:#222;font-weight:normal;transform:scaleX(1.0063);transform-origin:0 0;">Таблиця "Природні зони Євразії"</div>
<div class="a" style="left:381px;top:280.80px;font-family:'Liberation Serif';font-size:16px;line-height:1;color:#000;font-weight:bold;transform:scaleX(0.9919);transform-origin:0 0;">Природна зона</div>
<div class="a" style="left:698.5px;top:280.80px;font-family:'Liberation Serif';font-size:16px;line-height:1;color:#000;font-weight:bold;">Географічне положення</div>
<div class="a" style="left:381px;top:326.80px;font-family:'Liberation Serif';font-size:16px;line-height:1;color:#000;font-weight:normal;">Пустелі</div>
<div class="a" style="left:698.5px;top:326.80px;font-family:'Liberation Serif';font-size:16px;line-height:1;color:#000;font-weight:normal;">Центральна Азія</div>
<div class="a" style="left:381px;top:368.80px;font-family:'Liberation Serif';font-size:16px;line-height:1;color:#000;font-weight:normal;"><b>Зона</b> перемінно-вологих (мусонних) лісів</div>
<div class="a" style="left:698.5px;top:368.80px;font-family:'Liberation Serif';font-size:16px;line-height:1;color:#000;font-weight:normal;">Південно-східне та південне узбережжя <b>Азії</b></div>
<div class="a" style="left:381px;top:410.80px;font-family:'Liberation Serif';font-size:16px;line-height:1;color:#000;font-weight:normal;">Савана і рідколісся</div>
<div class="a" style="left:698.5px;top:410.80px;font-family:'Liberation Serif';font-size:16px;line-height:1;color:#000;font-weight:normal;">Півострови Індостан та Індокитай.</div>
<div class="a" style="left:381px;top:452.80px;font-family:'Liberation Serif';font-size:16px;line-height:1;color:#000;font-weight:normal;">Вологі екваторіальні ліси – гілеї</div>
<div class="a" style="left:698.5px;top:452.80px;font-family:'Liberation Serif';font-size:16px;line-height:1;color:#000;font-weight:normal;">Півострів Малакка, Південно-східні острови.</div>
<div class="a" style="left:381px;top:482px;width:1px;height:17px;background:#000;"></div>
<svg class="a" style="left:420px;top:382.5px;" width="69" height="3" viewBox="0 0 69 3"><path d="M0 2 L1.33 0 L2.66 2 L3.99 0 L5.32 2 L6.65 0 L7.98 2 L9.31 0 L10.64 2 L11.97 0 L13.30 2 L14.63 0 L15.96 2 L17.29 0 L18.62 2 L19.95 0 L21.28 2 L22.61 0 L23.94 2 L25.27 0 L26.60 2 L27.93 0 L29.26 2 L30.59 0 L31.92 2 L33.25 0 L34.58 2 L35.91 0 L37.24 2 L38.57 0 L39.90 2 L41.23 0 L42.56 2 L43.89 0 L45.22 2 L46.55 0 L47.88 2 L49.21 0 L50.54 2 L51.87 0 L53.20 2 L54.53 0 L55.86 2 L57.19 0 L58.52 2 L59.85 0 L61.18 2 L62.51 0 L63.84 2 L65.17 0 L66.50 2 L67.83 0" fill="none" stroke="#d02020" stroke-width="0.9"/></svg>
<svg class="a" style="left:571px;top:466.5px;" width="32" height="3" viewBox="0 0 32 3"><path d="M0 2 L1.33 0 L2.66 2 L3.99 0 L5.32 2 L6.65 0 L7.98 2 L9.31 0 L10.64 2 L11.97 0 L13.30 2 L14.63 0 L15.96 2 L17.29 0 L18.62 2 L19.95 0 L21.28 2 L22.61 0 L23.94 2 L25.27 0 L26.60 2 L27.93 0 L29.26 2 L30.59 0 L31.92 2" fill="none" stroke="#d02020" stroke-width="0.9"/></svg>
<svg class="a" style="left:781px;top:424.5px;" width="60" height="3" viewBox="0 0 60 3"><path d="M0 2 L1.33 0 L2.66 2 L3.99 0 L5.32 2 L6.65 0 L7.98 2 L9.31 0 L10.64 2 L11.97 0 L13.30 2 L14.63 0 L15.96 2 L17.29 0 L18.62 2 L19.95 0 L21.28 2 L22.61 0 L23.94 2 L25.27 0 L26.60 2 L27.93 0 L29.26 2 L30.59 0 L31.92 2 L33.25 0 L34.58 2 L35.91 0 L37.24 2 L38.57 0 L39.90 2 L41.23 0 L42.56 2 L43.89 0 L45.22 2 L46.55 0 L47.88 2 L49.21 0 L50.54 2 L51.87 0 L53.20 2 L54.53 0 L55.86 2 L57.19 0 L58.52 2 L59.85 0" fill="none" stroke="#d02020" stroke-width="0.9"/></svg>
<div class="a" style="left:0px;top:706px;width:1360px;height:22px;background:#f1f1f1;"></div>
<div class="a" style="left:0px;top:706px;width:1360px;height:1px;background:#c8c8c8;"></div>
<div class="a" style="left:7.5px;top:711.00px;font-family:'Liberation Sans';font-size:12.4px;line-height:1;color:#444;font-weight:normal;transform:scaleX(0.9044);transform-origin:0 0;">Страница 1 из 2</div>
<div class="a" style="left:111.8px;top:711.00px;font-family:'Liberation Sans';font-size:12.4px;line-height:1;color:#444;font-weight:normal;transform:scaleX(0.8646);transform-origin:0 0;">Число слов: 166</div>
<svg class="a" style="left:213px;top:710px;" width="16" height="13" viewBox="0 0 16 13"><path d="M0.5 0.5H6L7.5 2V12.5L6 11H0.5Z" fill="none" stroke="#666"/><path d="M7.5 2L9 0.5H10" fill="none" stroke="#666"/><path d="M10 3L14 8M14 3L10 8" stroke="#555" stroke-width="1.2"/><path d="M7.5 12.5L9 11H11" fill="none" stroke="#666"/></svg>
<div class="a" style="left:244.7px;top:711.00px;font-family:'Liberation Sans';font-size:12.4px;line-height:1;color:#444;font-weight:normal;transform:scaleX(0.9594);transform-origin:0 0;">украинский</div>
<svg class="a" style="left:1080px;top:710px;" width="14" height="13" viewBox="0 0 14 13"><path d="M0.5 1.5H5.5L7 2.5L8.5 1.5H13.5V10.5H8.5L7 11.5L5.5 10.5H0.5Z" fill="none" stroke="#666"/><path d="M7 2.5V11.5" stroke="#666"/><path d="M2 3.5H5.5M2 5.5H5.5M2 7.5H5.5M8.5 3.5H12M8.5 5.5H12M8.5 7.5H12" stroke="#777"/><path d="M6 12.5H8" stroke="#666"/></svg>
<div class="a" style="left:1106px;top:707px;width:38px;height:21px;background:#c6c6c6;"></div>
<svg class="a" style="left:1118px;top:710px;" width="14" height="13" viewBox="0 0 14 13"><rect x="0.5" y="0.5" width="13" height="12" fill="none" stroke="#666"/><path d="M2 3.5H12M2 5.5H12M2 7.5H12M2 9.5H12" stroke="#666"/></svg>
<svg class="a" style="left:1156px;top:709px;" width="16" height="15" viewBox="0 0 16 15"><path d="M0.5 0.5H11.5V6 M0.5 0.5V11.5H6" fill="none" stroke="#666"/><path d="M2 2.5H10M2 4.5H10M2 6.5H7M2 8.5H6" stroke="#777"/><circle cx="11.5" cy="11" r="3.5" fill="#666"/><path d="M10 9.5L11.5 11L10.5 13.5M12.5 8.5L14 10.5" stroke="#ddd" stroke-width=".9" fill="none"/></svg>
<div class="a" style="left:1187px;top:715.5px;width:7px;height:2px;background:#555;"></div>
<div class="a" style="left:1196px;top:716px;width:102px;height:1px;background:#aaa;"></div>
<div class="a" style="left:1245px;top:711px;width:4px;height:11px;background:#555;"></div>
<div class="a" style="left:1301px;top:715.5px;width:9px;height:2px;background:#555;"></div>
<div class="a" style="left:1304.5px;top:712px;width:2px;height:9px;background:#555;"></div>
<div class="a" style="left:1323.7px;top:711.00px;font-family:'Liberation Sans';font-size:12.4px;line-height:1;color:#444;font-weight:normal;transform:scaleX(0.8674);transform-origin:0 0;">100%</div>
<div class="a" style="left:0;top:728px;width:1360px;height:40px;background:linear-gradient(90deg,#364040 0px,#3c4646 20px,#4d5042 50px,#3f443c 200px,#3a3e36 400px,#40453b 560px,#4a4e44 760px,#3f463b 900px,#34402f 1000px,#3f4a36 1080px,#4a4e3a 1180px,#3b3e33 1300px,#33362e 1360px)"></div>
<div class="a" style="left:0;top:728px;width:1360px;height:40px;background:radial-gradient(ellipse 50px 14px at 1070px 36px,rgba(140,150,80,.45),rgba(140,150,80,0)),radial-gradient(ellipse 40px 10px at 1215px 38px,rgba(130,135,85,.4),rgba(130,135,85,0)),radial-gradient(ellipse 60px 12px at 1150px 8px,rgba(110,120,90,.3),rgba(110,120,90,0)),radial-gradient(ellipse 50px 16px at 1290px 30px,rgba(120,120,100,.3),rgba(120,120,100,0))"></div>
<div class="a" style="left:0px;top:728px;width:1360px;height:1px;background:#1a1d1c;"></div>
<div class="a" style="left:0px;top:729px;width:1360px;height:1px;background:rgba(200,205,200,.35);"></div>
<div class="a" style="left:8px;top:729px;width:38px;height:38px;border-radius:50%;background:radial-gradient(ellipse at 50% 95%,#3fd0f5 0%,#1a9ee0 30%,#0a5fb0 60%,#1e5f9e 75%,#9cc3dd 100%);box-shadow:0 0 0 1px rgba(30,50,60,.8),inset 0 0 0 1px rgba(200,230,245,.5)"></div>
<svg class="a" style="left:15px;top:736px;" width="24" height="24" viewBox="0 0 24 24"><path d="M3 2.5C6 0.5 9 0.5 12.5 2.5L11 10C8 8.3 5.5 8.3 2 10Z" fill="#f0561d"/><path d="M14 3.5C17 5.5 20 5.5 23.5 3.5L22 11.5C19 13.5 16 13.5 12.5 11.5Z" fill="#84c43a"/><path d="M1.5 11.5C5 9.5 8 9.5 11 11.5L9.5 19.5C6.5 17.5 3.5 17.5 0 19.5Z" fill="#2ea7e8"/><path d="M12.3 13C15.5 15 18.5 15 22 13L20.5 21C17.5 23 14.5 23 11 21Z" fill="#fbc51e"/></svg>
<div class="a" style="left:12px;top:730px;width:30px;height:15px;border-radius:50% 50% 45% 45%;background:linear-gradient(180deg,rgba(255,255,255,.55),rgba(255,255,255,.08))"></div>
<div class="a" style="left:60px;top:729px;width:158px;height:38px;border-radius:3px;border:1px solid rgba(215,220,215,.6);box-shadow:inset 0 0 0 1px rgba(0,0,0,.3);background:linear-gradient(172deg,rgba(215,215,205,.62) 0%,rgba(170,170,160,.48) 35%,rgba(105,105,98,.4) 70%,rgba(70,70,64,.38) 100%)"></div>
<div class="a" style="left:222px;top:729px;width:158px;height:38px;border-radius:3px;border:1px solid rgba(215,220,215,.6);box-shadow:inset 0 0 0 1px rgba(0,0,0,.3);background:linear-gradient(172deg,rgba(215,215,205,.62) 0%,rgba(170,170,160,.48) 35%,rgba(105,105,98,.4) 70%,rgba(70,70,64,.38) 100%)"></div>
<div class="a" style="left:384px;top:729px;width:158px;height:38px;border-radius:3px;border:1px solid rgba(215,220,215,.6);box-shadow:inset 0 0 0 1px rgba(0,0,0,.3);background:linear-gradient(90deg,rgba(0,0,0,0) 40%,rgba(40,70,90,.35)),linear-gradient(172deg,rgba(215,215,205,.62) 0%,rgba(170,170,160,.48) 35%,rgba(105,105,98,.4) 70%,rgba(70,70,64,.38) 100%)"></div>
<div class="a" style="left:546px;top:729px;width:158px;height:38px;border-radius:3px;border:1px solid rgba(215,220,215,.6);box-shadow:inset 0 0 0 1px rgba(0,0,0,.3);background:linear-gradient(90deg,rgba(0,0,0,0) 30%,rgba(40,80,110,.4)),linear-gradient(172deg,rgba(215,215,205,.62) 0%,rgba(170,170,160,.48) 35%,rgba(105,105,98,.4) 70%,rgba(70,70,64,.38) 100%)"></div>
<div class="a" style="left:708px;top:729px;width:158px;height:38px;border-radius:3px;border:1px solid rgba(215,220,215,.6);box-shadow:inset 0 0 0 1px rgba(0,0,0,.3);background:linear-gradient(175deg,rgba(230,230,225,.75) 0%,rgba(200,200,195,.6) 40%,rgba(150,150,145,.5) 100%)"></div>
<div class="a" style="left:870px;top:729px;width:158px;height:38px;border-radius:3px;border:1px solid rgba(215,220,215,.6);box-shadow:inset 0 0 0 1px rgba(0,0,0,.3);background:linear-gradient(172deg,rgba(215,215,205,.62) 0%,rgba(170,170,160,.48) 35%,rgba(105,105,98,.4) 70%,rgba(70,70,64,.38) 100%)"></div>
<svg class="a" style="left:70px;top:733px;" width="32" height="32" viewBox="0 0 32 32"><circle cx="15" cy="15" r="14.5" fill="#db4437"/><path d="M15 15 L27.5 22.3 A14.5 14.5 0 0 1 2.5 22.3Z" fill="#0f9d58"/><path d="M15 15 L2.5 22.3 A14.5 14.5 0 0 1 15 0.5Z" fill="#0f9d58"/><path d="M15 15 L15 0.5 A14.5 14.5 0 0 1 2.44 7.75 Z" fill="#db4437"/><path d="M15 15 L27.56 7.75 A14.5 14.5 0 0 1 27.5 22.3Z" fill="#ffcd40"/><path d="M15 15 L2.44 7.75 A14.5 14.5 0 0 1 27.56 7.75Z" fill="#db4437"/><circle cx="15" cy="15" r="6.5" fill="#fff"/><circle cx="15" cy="15" r="5" fill="#4285f4"/><circle cx="23" cy="23" r="7.5" fill="#1a56a8" stroke="#123" stroke-width=".5"/><text x="20" y="26.5" font-family="Liberation Sans" font-size="9" font-weight="bold" fill="#fff">P</text></svg>
<div class="a" style="left:105.3px;top:741.80px;font-family:'Liberation Sans';font-size:12.4px;line-height:1;color:#fff;font-weight:normal;transform:scaleX(0.9811);transform-origin:0 0;">Природні зони м...</div>
<svg class="a" style="left:232px;top:733px;" width="31" height="31" viewBox="0 0 31 31"><path d="M15.5 1C7.5 1 2 6 2 13.5C2 18.5 4.5 22 8 24V30L13.5 26C14 26 15 26 15.5 26C23.5 26 29 21 29 13.5C29 6 23.5 1 15.5 1Z" fill="#7360f2" stroke="#fff" stroke-width="2"/><path d="M10 8.5C9 9 8.5 10 9 11.5C10 15 13 18.5 17 20C18.5 20.5 19.5 20 20 19L20.5 18C20.7 17.5 20.5 17 20 16.7L18 15.5C17.5 15.2 17 15.3 16.7 15.7L16 16.5C14 15.5 12.5 14 11.5 12L12.3 11.3C12.7 11 12.8 10.5 12.5 10L11.3 8C11 7.5 10.5 7.3 10 8.5Z" fill="#fff"/><path d="M16 7.5A6 6 0 0 1 22 13.5M16 9.8A3.7 3.7 0 0 1 19.7 13.5" fill="none" stroke="#fff" stroke-width="1.1"/></svg>
<div class="a" style="left:267.5px;top:741.80px;font-family:'Liberation Sans';font-size:12.4px;line-height:1;color:#fff;font-weight:normal;transform:scaleX(1.0103);transform-origin:0 0;">Viber</div>
<svg class="a" style="left:394px;top:733px;" width="32" height="32" viewBox="0 0 32 32"><circle cx="15" cy="15" r="14.5" fill="#db4437"/><path d="M15 15 L27.5 22.3 A14.5 14.5 0 0 1 2.5 22.3Z" fill="#0f9d58"/><path d="M15 15 L2.5 22.3 A14.5 14.5 0 0 1 15 0.5Z" fill="#0f9d58"/><path d="M15 15 L15 0.5 A14.5 14.5 0 0 1 2.44 7.75 Z" fill="#db4437"/><path d="M15 15 L27.56 7.75 A14.5 14.5 0 0 1 27.5 22.3Z" fill="#ffcd40"/><path d="M15 15 L2.44 7.75 A14.5 14.5 0 0 1 27.56 7.75Z" fill="#db4437"/><circle cx="15" cy="15" r="6.5" fill="#fff"/><circle cx="15" cy="15" r="5" fill="#4285f4"/><circle cx="23" cy="23" r="7.5" fill="#3b6fd4"/><circle cx="20" cy="24" r="2" fill="none" stroke="#fff" stroke-width="1"/><circle cx="26" cy="24" r="2" fill="none" stroke="#fff" stroke-width="1"/></svg>
<div class="a" style="left:429px;top:741.80px;font-family:'Liberation Sans';font-size:12.4px;line-height:1;color:#fff;font-weight:normal;transform:scaleX(0.9636);transform-origin:0 0;">Школьные Знан...</div>
<svg class="a" style="left:556px;top:733px;" width="31" height="30" viewBox="0 0 31 30"><rect x="13" y="4.5" width="17" height="21" fill="#fff"/><path d="M22 7.5A4.5 4.5 0 1 0 26.5 12H22Z" fill="#d24726"/><path d="M23 6.5A4.5 4.5 0 0 1 27.5 11H23Z" fill="none" stroke="#d24726" stroke-width=".8"/><rect x="19" y="17.5" width="8" height="1.5" fill="#d24726"/><rect x="19" y="20.5" width="8" height="1.5" fill="#d24726"/><path d="M0 4L18 1V29L0 26Z" fill="#d24726"/><text x="2.5" y="21.5" font-family="Liberation Sans" font-size="15" font-weight="bold" fill="#fff">P</text></svg>
<div class="a" style="left:591.5px;top:741.80px;font-family:'Liberation Sans';font-size:12.4px;line-height:1;color:#fff;font-weight:normal;transform:scaleX(0.9658);transform-origin:0 0;">Презентация1 - P...</div>
<svg class="a" style="left:718px;top:733px;" width="31" height="30" viewBox="0 0 31 30"><rect x="12" y="4" width="18" height="22" fill="#fff" stroke="#aaa" stroke-width=".5"/><rect x="18" y="8" width="9" height="1.5" fill="#2b579a"/><rect x="18" y="11" width="9" height="1.5" fill="#2b579a"/><rect x="18" y="14" width="9" height="1.5" fill="#2b579a"/><rect x="18" y="17" width="9" height="1.5" fill="#2b579a"/><rect x="18" y="20" width="9" height="1.5" fill="#2b579a"/><path d="M0 4L17 1V29L0 26Z" fill="#2b579a"/><text x="0.5" y="20.5" font-family="Liberation Sans" font-size="13" font-weight="bold" fill="#fff" textLength="16" lengthAdjust="spacingAndGlyphs">W</text></svg>
<div class="a" style="left:753px;top:741.80px;font-family:'Liberation Sans';font-size:12.4px;line-height:1;color:#fff;font-weight:normal;transform:scaleX(0.9810);transform-origin:0 0;">Документ1 - Wor...</div>
<svg class="a" style="left:878px;top:733px;" width="26" height="31" viewBox="0 0 26 31"><path d="M3 4L9 1H14L16 4V27L9 30H3Z" fill="#e8cf7a"/><path d="M14 4H21V26H16Z" fill="#f3e2a0"/><path d="M8 6L16 4V28L8 30Z" fill="#f6e7ad" stroke="#c9a84e" stroke-width=".6"/></svg>
<div class="a" style="left:915px;top:741.80px;font-family:'Liberation Sans';font-size:12.4px;line-height:1;color:#fff;font-weight:normal;transform:scaleX(0.9785);transform-origin:0 0;">Костя</div>
<div class="a" style="left:1127.5px;top:741.00px;font-family:'Liberation Sans';font-size:12.4px;line-height:1;color:#fff;font-weight:normal;transform:scaleX(0.8711);transform-origin:0 0;">UK</div>
<svg class="a" style="left:1149px;top:738px;" width="17" height="15" viewBox="0 0 17 15"><path d="M6 6.5C6 4 9 5 11 3.5C12.5 2.5 13.5 2 15.5 2" fill="none" stroke="#ddd" stroke-width="1"/><rect x="0.5" y="6.5" width="15" height="8" rx="1" fill="#e8e8e8" stroke="#999" stroke-width=".6"/><path d="M2 8.8H14M2 10.8H14M3 12.8H13" stroke="#888" stroke-dasharray="1 1"/></svg>
<svg class="a" style="left:1177px;top:746px;" width="9" height="6" viewBox="0 0 9 6"><path d="M0 5.5L4.5 0.5L9 5.5Z" fill="#fff"/></svg>
<svg class="a" style="left:1197px;top:742px;" width="17" height="14" viewBox="0 0 17 14"><path d="M0.5 4.5H4L8 0.5V13.5L4 9.5H0.5Z" fill="#f2f2f2" stroke="#ccc" stroke-width=".5"/><path d="M10.5 4.5A3 3 0 0 1 10.5 9.5M12.5 2.5A6 6 0 0 1 12.5 11.5" fill="none" stroke="#fff" stroke-width="1.2"/></svg>
<svg class="a" style="left:1221px;top:740px;" width="17" height="16" viewBox="0 0 17 16"><path d="M1.5 0.5V15.5" stroke="#fff" stroke-width="1.6"/><path d="M2.5 1.5H9.5L10.5 3.5H15.5L13.5 6L15.5 8.5H9L8 6.5H2.5Z" fill="#f5f5f5"/><path d="M8 6.5L9.5 3.5" stroke="#444" stroke-width=".8"/></svg>
<svg class="a" style="left:1245px;top:740px;" width="17" height="16" viewBox="0 0 17 16"><path d="M2 0V5M4.5 0V5M1 5H6V9H1Z" fill="#fff" stroke="#fff" stroke-width=".8"/><rect x="6.5" y="3.5" width="10" height="8" fill="#333" stroke="#fff" stroke-width="1.2"/><path d="M11.5 11.5V14.5M8 15H15" stroke="#fff" stroke-width="1.2"/><path d="M3.5 9V13H6.5" fill="none" stroke="#fff"/></svg>
<div class="a" style="left:1293.8px;top:734.50px;font-family:'Liberation Sans';font-size:13px;line-height:1;color:#fff;font-weight:normal;transform:scaleX(1.0139);transform-origin:0 0;">10:20</div>
<div class="a" style="left:1280px;top:750.00px;font-family:'Liberation Sans';font-size:13px;line-height:1;color:#fff;font-weight:normal;transform:scaleX(0.8189);transform-origin:0 0;">01.11.2021</div>
<div class="a" style="left:1346px;top:729px;width:14px;height:39px;border:1px solid rgba(200,210,200,.5);border-radius:2px;background:linear-gradient(180deg,rgba(255,255,255,.2),rgba(255,255,255,.05))"></div>
</div></body></html>
